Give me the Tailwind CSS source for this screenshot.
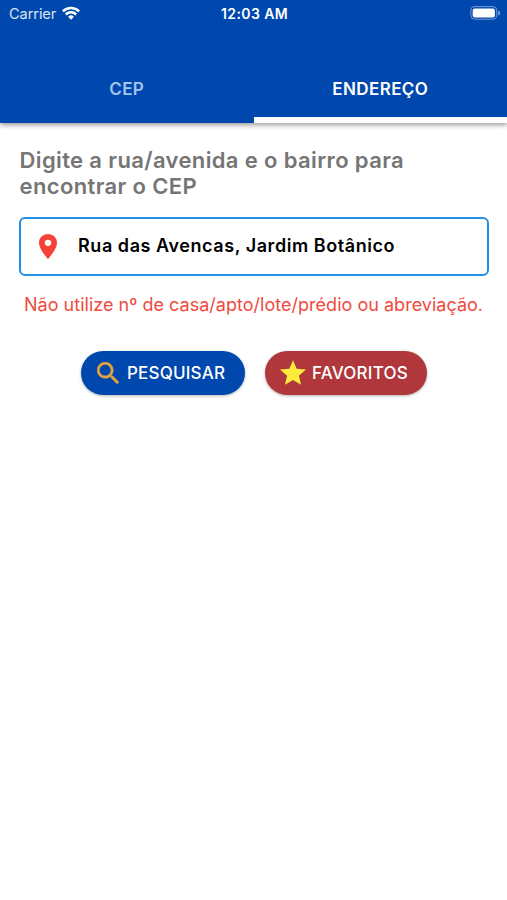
<!DOCTYPE html>
<html lang="pt-BR">
<head>
  <meta charset="UTF-8" />
  <meta name="viewport" content="width=device-width, initial-scale=1.0" />
  <title>Busca CEP</title>
  <script src="https://cdn.jsdelivr.net/npm/@tailwindcss/browser@4"></script>
</head>
<body class="bg-white min-h-screen font-['Inter',sans-serif] overflow-hidden">
  <header class="h-[123px] bg-[#0048ad] text-white shadow-[0_2px_5px_rgba(0,0,0,0.4)] flex flex-col">
    <!-- Status bar -->
    <div class="h-7 pl-[9px] pr-[7px] grid grid-cols-3 items-center whitespace-nowrap">
      <div class="flex items-center gap-1.5 text-[14.5px] text-white/85">
        <span class="tracking-[-0.05px]">Carrier</span>
        <svg class="w-[18px] h-[14px] -mt-0.5" viewBox="0 0 18 14" fill="none" stroke="white" stroke-width="2.5">
          <path d="M0.9 5.4a11.6 11.6 0 0 1 16.2 0" />
          <path d="M3.8 8.5a7.4 7.4 0 0 1 10.4 0" />
          <path d="M9 13.7L6.1 10.8a4.1 4.1 0 0 1 5.8 0z" fill="white" stroke="none" />
        </svg>
      </div>
      <span class="-mt-px text-center text-[14px] font-semibold tracking-[0.4px]">12:03 AM</span>
      <svg class="justify-self-end w-[30px] h-[14px] -mt-0.5" viewBox="0 0 30 14">
        <rect x="0.9" y="0.6" width="25.8" height="12.6" rx="3.6" fill="none" stroke="white" stroke-opacity="0.45" />
        <rect x="2.7" y="2.4" width="22.2" height="9" rx="2" fill="white" />
        <path d="M28 4.8a2.2 2.2 0 0 1 0 4.4z" fill="white" fill-opacity="0.45" />
      </svg>
    </div>
    <!-- Tabs -->
    <nav class="flex-1 grid grid-cols-2 text-[17px] font-semibold text-center">
      <a class="pt-[49px] leading-6 tracking-[0.4px] text-[#a3c4ed]">CEP</a>
      <a class="pt-[49px] leading-6 tracking-[0.4px] border-b-[6px] border-white">ENDEREÇO</a>
    </nav>
  </header>

  <main class="pl-[19px] pt-[24px]">
    <h1 class="pl-[0.5px] text-[22px] leading-[26px] tracking-[0.37px] font-semibold text-[#757575] whitespace-nowrap">Digite a rua/avenida e o bairro para<br />encontrar o CEP</h1>

    <div class="mt-[18px] h-[59px] w-[470px] border-[2.5px] border-[#2190e6] rounded-[6px] flex items-center pl-[18px] pb-[2px]">
      <svg class="w-[18px] h-[25px] mt-[2px]" viewBox="5 2 14 20" preserveAspectRatio="none" fill="#f44336">
        <path d="M12 2C8.13 2 5 5.13 5 9c0 5.25 7 13 7 13s7-7.750 7-13c0-3.870-3.130-7-7-7zm0 9.500a2.500 2.500 0 1 1 0-5 2.500 2.500 0 0 1 0 5z" />
      </svg>
      <span class="ml-[21px] text-[18px] tracking-[0.56px] font-semibold text-black whitespace-nowrap">Rua das Avencas, Jardim Botânico</span>
    </div>

    <p class="mt-[17px] ml-[5px] text-[18px] leading-6 tracking-[0.02px] text-[#f04a3e] whitespace-nowrap">Não utilize nº de casa/apto/lote/prédio ou abreviação.</p>

    <div class="mt-[34px] ml-[62px] flex gap-5 text-white text-[17px] tracking-[0.2px] font-medium whitespace-nowrap">
      <button class="w-[164px] h-11 rounded-full bg-[#0048ad] shadow-[0_1px_3px_rgba(0,0,0,0.3)] flex items-center pl-[16px]">
        <svg class="w-[22px] h-[22px] mr-[8px]" viewBox="3 3 17.490 17.490" fill="#e8a33d" stroke="#e8a33d" stroke-width="0.3">
          <path d="M15.500 14h-.79l-.28-.27A6.471 6.471 0 0 0 16 9.500 6.500 6.500 0 1 0 9.500 16c1.610 0 3.090-.59 4.230-1.570l.27.280v.79l5 4.990L20.490 19l-4.990-5zm-6 0C7.010 14 5 11.990 5 9.500S7.010 5 9.500 5 14 7.010 14 9.500 11.990 14 9.500 14z" />
        </svg>
        <span class="mt-px">PESQUISAR</span>
      </button>
      <button class="w-[162px] h-11 rounded-full bg-[#b0373b] shadow-[0_1px_3px_rgba(0,0,0,0.3)] flex items-center pl-[15px]">
        <svg class="w-[26px] h-[25px] mr-[6px] -mt-0.5" viewBox="2 2 20 19" fill="#ffeb3b">
          <path d="M12 17.270L18.180 21l-1.640-7.030L22 9.240l-7.190-.61L12 2 9.190 8.630 2 9.240l5.460 4.730L5.820 21z" />
        </svg>
        <span class="mt-px">FAVORITOS</span>
      </button>
    </div>
  </main>
</body>
</html>
